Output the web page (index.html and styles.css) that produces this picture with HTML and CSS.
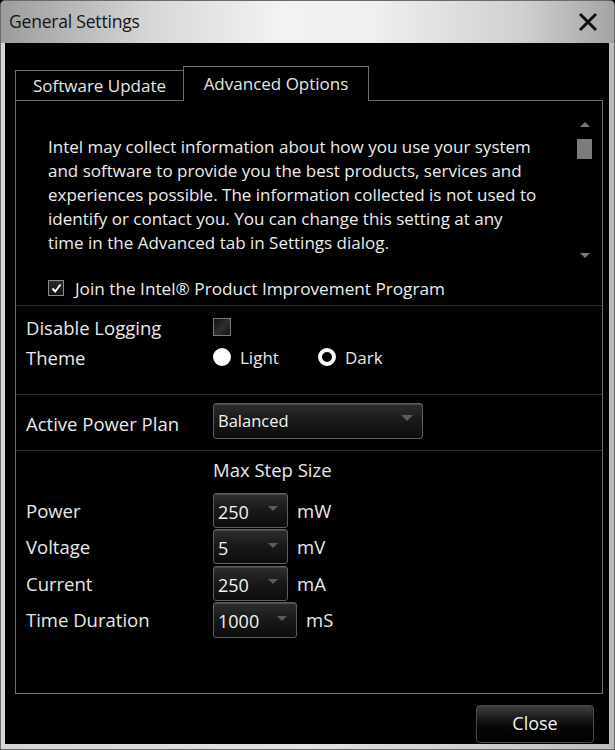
FILE: index.html
```html
<!DOCTYPE html>
<html>
<head>
<meta charset="utf-8">
<link rel="stylesheet" href="styles.css">
</head>
<body>
<div class="window">
  <div class="titlebar">
    <span class="title">General Settings</span>
    <svg class="close-x" width="20" height="20" viewBox="0 0 20 20"><path d="M2 2 L18 18 M18 2 L2 18" stroke="#111" stroke-width="3" fill="none"/></svg>
  </div>
  <div class="client">
    <div class="tabs">
      <div class="tab">Software Update</div>
      <div class="tab active">Advanced Options</div>
    </div>
    <div class="panel">
      <div class="info">
        <div class="info-text">Intel may collect information about how you use your system<br>and software to provide you the best products, services and<br>experiences possible. The information collected is not used to<br>identify or contact you. You can change this setting at any<br>time in the Advanced tab in Settings dialog.</div>
        <div class="scrollbar">
          <span class="arrow-up"></span>
          <span class="thumb"></span>
          <span class="spacer"></span>
          <span class="arrow-down"></span>
        </div>
      </div>
      <div class="join">
        <span class="check checked"><svg width="13" height="13" viewBox="0 0 13 13"><path d="M2.5 6.5 L5.2 9.5 L10.5 2.5" stroke="#fff" stroke-width="2" fill="none"/></svg></span>
        <span>Join the Intel® Product Improvement Program</span>
      </div>
      <div class="sep"></div>
      <div class="section general">
        <div class="label">Disable Logging</div>
        <div class="ctrl"><span class="check big"></span></div>
        <div class="label">Theme</div>
        <div class="ctrl radios">
          <span class="radio-item"><span class="radio filled"></span>Light</span>
          <span class="radio-item"><span class="radio ring"></span>Dark</span>
        </div>
      </div>
      <div class="sep"></div>
      <div class="section plan">
        <div class="label lower">Active Power Plan</div>
        <div class="ctrl"><div class="dropdown wide"><span>Balanced</span><span class="caret"></span></div></div>
      </div>
      <div class="sep"></div>
      <div class="section steps">
        <div class="label"></div>
        <div class="ctrl header">Max Step Size</div>
        <div class="label">Power</div>
        <div class="ctrl"><div class="dropdown small"><span>250</span><span class="caret"></span></div><span class="unit">mW</span></div>
        <div class="label">Voltage</div>
        <div class="ctrl"><div class="dropdown small"><span>5</span><span class="caret"></span></div><span class="unit">mV</span></div>
        <div class="label">Current</div>
        <div class="ctrl"><div class="dropdown small"><span>250</span><span class="caret"></span></div><span class="unit">mA</span></div>
        <div class="label">Time Duration</div>
        <div class="ctrl"><div class="dropdown medium"><span>1000</span><span class="caret"></span></div><span class="unit">mS</span></div>
      </div>
    </div>
    <div class="footer">
      <button class="btn">Close</button>
    </div>
  </div>
</div>
</body>
</html>
```

FILE: styles.css
```css
* { box-sizing: border-box; }
html, body { margin: 0; padding: 0; background: #000; }
body { font-family: "Open Sans", "Noto Sans", sans-serif; font-size: 16px; color: #e8e8e8; }

.window {
  width: 615px;
  height: 750px;
  display: flex;
  flex-direction: column;
  border: 1px solid #6a6a6a;
  border-radius: 5px 5px 0 0;
  background: linear-gradient(90deg, #d6d6d6 0%, #e2e2e2 50%, #bdbdbd 100%);
  overflow: hidden;
}

.titlebar {
  height: 42px;
  flex: none;
  display: flex;
  align-items: center;
  justify-content: space-between;
  padding: 0 16px 2px 8px;
  background: linear-gradient(90deg, #9c9c9c 0%, #d8d8d8 25%, #f2f2f2 45%, #f0f0f0 60%, #d0d0d0 85%, #a4a4a4 100%);
}
.title { font-size: 17.5px; color: #141414; letter-spacing: -0.2px; }
.close-x { display: block; margin-top: 1px; }

.client {
  flex: 1;
  margin: 0 5px 5px 4px;
  background: #000;
  display: flex;
  flex-direction: column;
  padding: 23px 6px 0 10px;
}

.tabs { display: flex; align-items: flex-end; height: 34px; }
.tab {
  height: 30px;
  width: 169px;
  border: 1px solid #6e6e6e;
  border-bottom: none;
  display: flex;
  align-items: center;
  justify-content: center;
  font-size: 17px;
  color: #e6e6e6;
  padding-bottom: 1px;
}
.tab.active {
  height: 35px;
  width: 186px;
  margin-left: -1px;
  margin-bottom: -1px;
  background: #000;
  position: relative;
  z-index: 1;
  padding-bottom: 1px;
}

.panel {
  height: 594px;
  border: 1px solid #6e6e6e;
  display: flex;
  flex-direction: column;
}

.info {
  display: flex;
  justify-content: space-between;
  padding: 20px 10px 0 32px;
}
.info-text {
  padding-top: 14px;
  line-height: 24px;
  font-size: 17px;
  white-space: nowrap;
  color: #ececec;
}
.scrollbar {
  width: 15px;
  height: 140px;
  display: flex;
  flex-direction: column;
  align-items: center;
}
.arrow-up { width: 0; height: 0; border-left: 5px solid transparent; border-right: 5px solid transparent; border-bottom: 5px solid #7a7a7a; margin-top: 1px; }
.thumb { width: 15px; height: 20px; background: #7c7c7c; margin-top: 12px; }
.spacer { flex: 1; }
.arrow-down { width: 0; height: 0; border-left: 5px solid transparent; border-right: 5px solid transparent; border-top: 5px solid #7a7a7a; margin-bottom: 3px; }

.join {
  margin-top: 15px;
  height: 24px;
  display: flex;
  align-items: center;
  padding-left: 32px;
  font-size: 17.2px;
  color: #ececec;
}
.check {
  width: 16px;
  height: 16px;
  border: 1px solid #8a8a8a;
  background: linear-gradient(180deg, #2c2c2c, #111);
  display: inline-flex;
  align-items: center;
  justify-content: center;
  margin-right: 11px;
  flex: none;
}
.check.big { width: 18px; height: 18px; margin: 0; background: linear-gradient(135deg, #111 0%, #2e2e2e 50%, #161616 100%); border-color: #7a7a7a; }

.sep { margin-top: 5px; border-top: 1px solid #2e2e2e; height: 0; }

.section {
  display: grid;
  grid-template-columns: 187px auto;
  padding-left: 10px;
  align-items: center;
}
.label { font-size: 18.5px; color: #e8e8e8; }
.lower { padding-top: 5px; }
.ctrl { display: flex; align-items: center; }

.general { padding-top: 6px; padding-bottom: 18px; grid-auto-rows: 30px; }
.general + .sep { margin-top: 4px; }
.radios { gap: 0; }
.radio-item { display: inline-flex; align-items: center; width: 105px; font-size: 17px; }
.radio { width: 18px; height: 18px; border-radius: 50%; margin-right: 9px; flex: none; }
.radio.filled { background: radial-gradient(circle at 50% 50%, #fff 0%, #fff 60%, #ddd 100%); }
.radio.ring { background: #000; border: 4.5px solid #fafafa; }

.plan { padding-top: 8px; padding-bottom: 0; }
.plan + .sep { margin-top: 11px; }

.dropdown {
  height: 36px;
  border: 1px solid #5e5e5e;
  border-radius: 3px;
  background: linear-gradient(180deg, #2e2e2e 0%, #1a1a1a 45%, #0c0c0c 100%);
  box-shadow: inset 0 1px 0 #4a4a4a;
  display: flex;
  align-items: center;
  justify-content: space-between;
  padding: 0 9px 0 4px;
  font-size: 18px;
  color: #f2f2f2;
}
.dropdown.wide { width: 210px; font-size: 16.5px; padding-bottom: 2px; }
.dropdown.small { width: 75px; height: 35px; padding-top: 3px; }
.dropdown.medium { width: 84px; height: 36px; padding-top: 3px; }
.caret { width: 0; height: 0; border-left: 6px solid transparent; border-right: 6px solid transparent; border-top: 6px solid #5a5a5a; margin-top: -4px; }
.dropdown.small .caret, .dropdown.medium .caret { margin-top: -6px; border-left-width: 5.5px; border-right-width: 5.5px; border-top-width: 5px; }
.unit { margin-left: 9px; font-size: 18.5px; }

.steps { padding-top: 1px; row-gap: 1.5px; }
.header { height: 24px; font-size: 18.5px; margin-bottom: 4px; }
.steps .ctrl { height: 35px; }

.footer {
  display: flex;
  justify-content: flex-end;
  padding: 11px 9px 0 0;
}
.btn {
  width: 118px;
  height: 38px;
  border: 1px solid #4a4a4a;
  border-radius: 4px;
  background: linear-gradient(180deg, #3e3e3e 0%, #1e1e1e 30%, #050505 60%, #000 100%);
  color: #f0f0f0;
  font-family: "Open Sans", "Noto Sans", sans-serif;
  font-size: 18px;
  padding: 0 0 2px 0;
}
```
